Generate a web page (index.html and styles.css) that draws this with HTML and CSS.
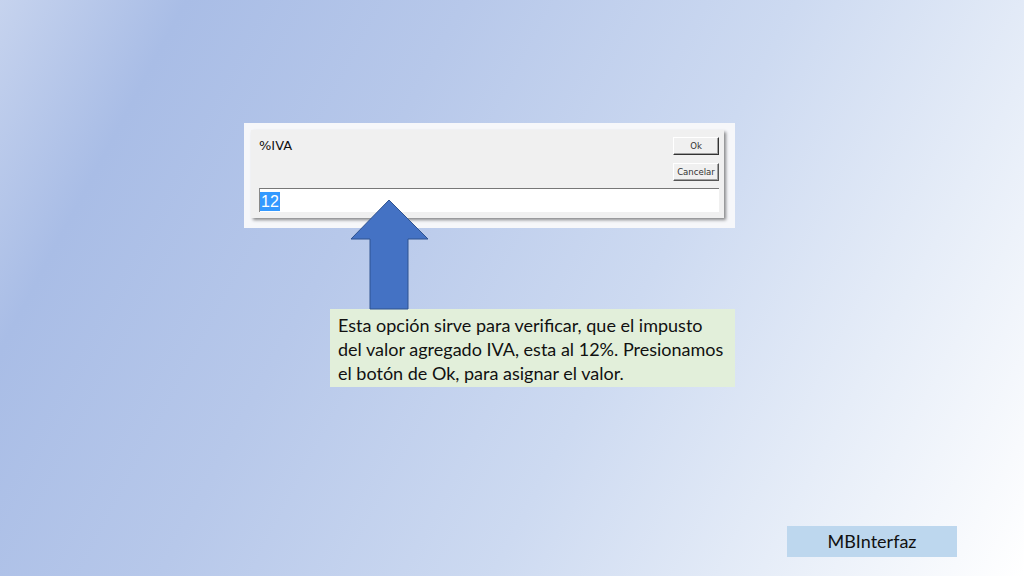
FILE: index.html
```html
<!DOCTYPE html>
<html>
<head>
<meta charset="utf-8">
<link rel="stylesheet" href="styles.css">
</head>
<body>
<div class="slide">
  <div class="shot">
    <div class="dialog">
      <div class="top">
        <div class="label">%IVA</div>
        <div class="buttons">
          <div class="btn ok">Ok</div>
          <div class="btn">Cancelar</div>
        </div>
      </div>
      <div class="input"><span class="sel">12</span></div>
    </div>
  </div>
  <svg class="arrow" width="80" height="112" viewBox="0 0 80 112">
    <polygon points="39,1 78,40 58,40 58,110 20,110 20,40 1,40" fill="#4472c4" stroke="#2f528f" stroke-width="1"/>
  </svg>
  <div class="note">Esta opción sirve para verificar, que el impusto<br>del valor agregado IVA, esta al 12%. Presionamos<br>el botón de Ok, para asignar el valor.</div>
  <div class="brand">MBInterfaz</div>
</div>
</body>
</html>
```

FILE: styles.css
```css
html, body { margin: 0; padding: 0; }
body { font-family: "Lato", "Liberation Sans", sans-serif; }
.slide {
  position: relative;
  width: 1024px;
  height: 576px;
  overflow: hidden;
  box-sizing: border-box;
  padding-top: 123px;
  background: linear-gradient(118deg, #c6d3ee 0%, #a9bde6 14%, #b7c8ea 35%, #cddaf1 60%, #e6edf8 80%, #ffffff 100%);
}
.shot {
  margin-left: 244px;
  width: 491px;
  height: 105px;
  box-sizing: border-box;
  padding: 7px 0 0 7px;
  background: #f6f7fa;
}
.dialog {
  width: 473px;
  height: 88px;
  box-sizing: border-box;
  background: #f0f0f0;
  box-shadow: 2px 2px 3px rgba(0,0,0,0.45);
  padding: 7px 5px 0 8px;
  display: flex;
  flex-direction: column;
}
.top {
  display: flex;
  justify-content: space-between;
  height: 51px;
}
.label {
  font-family: "DejaVu Sans", sans-serif;
  font-size: 13px;
  color: #111;
  margin-top: 1px;
}
.buttons {
  display: flex;
  flex-direction: column;
  gap: 8px;
}
.btn {
  width: 46px;
  height: 18px;
  box-sizing: border-box;
  background: #f0f0f0;
  border: 1px solid;
  border-color: #fff #555 #555 #fff;
  box-shadow: inset -1px -1px 0 #a0a0a0;
  font-family: "DejaVu Sans Condensed", "Liberation Sans", sans-serif;
  font-size: 9.5px;
  line-height: 16px;
  text-align: center;
  color: #333;
}
.ok { border-color: #fff #333 #333 #fff; }
.input {
  width: 460px;
  height: 24px;
  box-sizing: border-box;
  background: #fff;
  border-top: 1px solid #777;
  border-left: 1px solid #888;
  padding: 2px 0 0 0;
}
.sel {
  display: inline-block;
  background: #3399ff;
  color: #fff;
  font-family: "Liberation Sans", sans-serif;
  font-size: 16px;
  line-height: 19px;
  padding: 0 1px 0 1px;
}
.arrow {
  position: absolute;
  left: 350px;
  top: 199px;
}
.note {
  margin-top: 81px;
  margin-left: 330px;
  width: 405px;
  height: 78px;
  box-sizing: border-box;
  background: #e2efda;
  padding: 4px 0 0 8px;
  font-size: 18px;
  line-height: 24px;
  white-space: nowrap;
  color: #111;
}
.brand {
  margin-top: 139px;
  margin-left: 787px;
  width: 170px;
  height: 31px;
  background: #bdd7ee;
  font-size: 18px;
  line-height: 31px;
  text-align: center;
  color: #111;
}
```
